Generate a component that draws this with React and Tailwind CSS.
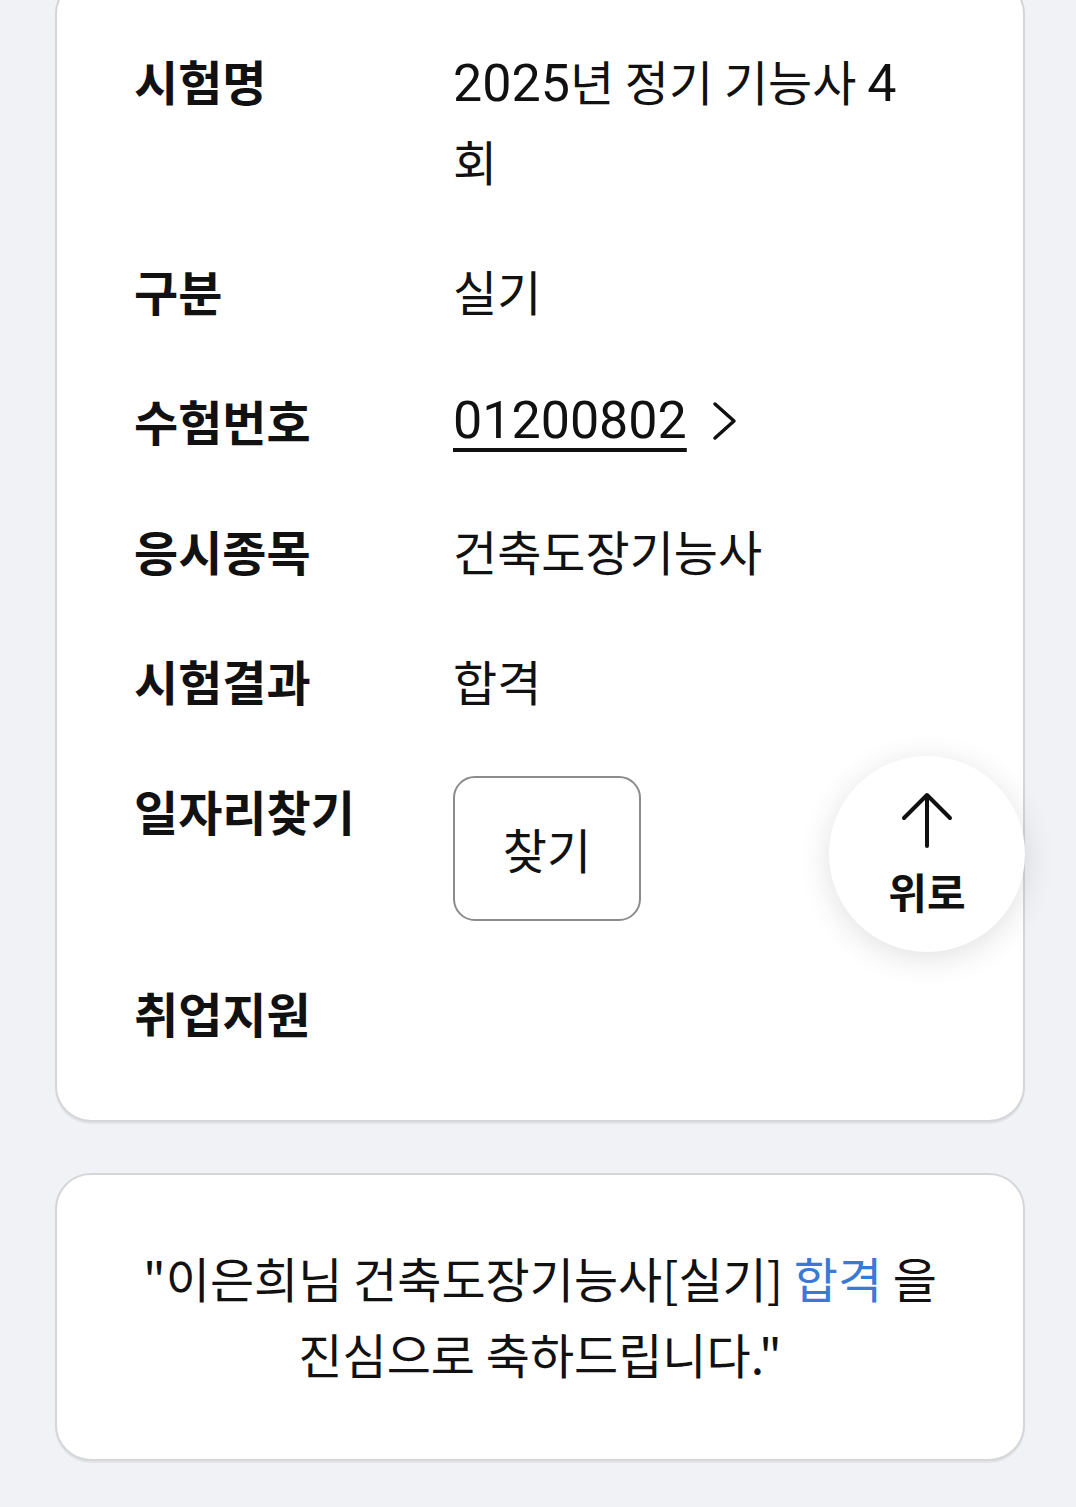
import { useState } from 'react'

const rows = [
  { label: '시험명', value: 'title' },
  { label: '구분', value: '실기' },
  { label: '수험번호', value: 'number' },
  { label: '응시종목', value: '건축도장기능사' },
  { label: '시험결과', value: '합격' },
  { label: '일자리찾기', value: 'button' },
  { label: '취업지원', value: '' },
]

function Digits({ children }) {
  return (
    <span className="font-['Roboto','Noto_Sans_CJK_KR',sans-serif] text-[52px]">
      {children}
    </span>
  )
}

function Value({ type }) {
  if (type === 'title') {
    return (
      <span>
        <Digits>2025</Digits>년 정기 기능사 <Digits>4</Digits>
        <br />회
      </span>
    )
  }

  if (type === 'number') {
    return (
      <span className="flex items-center gap-[24px]">
        <Digits>
          <span className="underline decoration-[4px] underline-offset-[10px]">
            01200802
          </span>
        </Digits>
        <svg width="28" height="40" viewBox="0 0 28 40" fill="none">
          <polyline
            points="4,3 23,20 4,37"
            stroke="#111"
            strokeWidth="3.5"
            strokeLinecap="round"
            strokeLinejoin="round"
          />
        </svg>
      </span>
    )
  }

  if (type === 'button') {
    return (
      <button className="mt-[4px] flex h-[145px] w-[188px] items-center justify-center rounded-[22px] border-2 border-[#8c8c8c] bg-white text-[48px] text-[#111]">
        찾기
      </button>
    )
  }

  return <span>{type}</span>
}

export default function App() {
  const [rowsData] = useState(rows)

  return (
    <div className="relative min-h-[1507px] overflow-hidden bg-[#f1f2f6] pl-[55px] pr-[51px] font-['Noto_Sans_CJK_KR','Noto_Sans',sans-serif] text-[#111]">
      {/* Result card */}
      <div className="-mt-[22px] rounded-[36px] border-2 border-[#d6d6d8] bg-white px-[77px] pb-[69px] pt-[62px] shadow-[0_2px_1px_rgba(0,0,0,0.06)]">
        <div className="flex flex-col gap-[53px]">
          {rowsData.map((row) => (
            <div key={row.label} className="flex items-start">
              <div className="w-[319px] shrink-0 text-[48px] font-bold leading-[77px]">
                {row.label}
              </div>
              <div className="min-w-0 flex-1 text-[48px] leading-[77px]">
                <Value type={row.value} />
              </div>
            </div>
          ))}
        </div>
      </div>

      {/* Message card */}
      <div className="mt-[51px] rounded-[36px] border-2 border-[#d6d6d8] bg-white px-[70px] pb-[68px] pt-[64px] text-center text-[48px] leading-[76px] break-keep shadow-[0_2px_1px_rgba(0,0,0,0.06)]">
        "이은희님 건축도장기능사[실기] <span className="text-[#3a7ad6]">합격</span> 을
        진심으로 축하드립니다."
      </div>

      {/* Scroll to top */}
      <button className="absolute left-[829px] top-[756px] flex h-[196px] w-[196px] flex-col items-center rounded-full bg-white pt-[36px] shadow-[0_6px_32px_rgba(0,0,0,0.12)]">
        <svg width="52" height="56" viewBox="0 0 52 56" fill="none">
          <path
            d="M26 3 L26 54 M3 26 L26 3 L49 26"
            stroke="#111"
            strokeWidth="4"
            strokeLinecap="round"
            strokeLinejoin="round"
          />
        </svg>
        <span className="mt-[18px] text-[42px] font-bold leading-[50px] text-[#111]">
          위로
        </span>
      </button>
    </div>
  )
}
